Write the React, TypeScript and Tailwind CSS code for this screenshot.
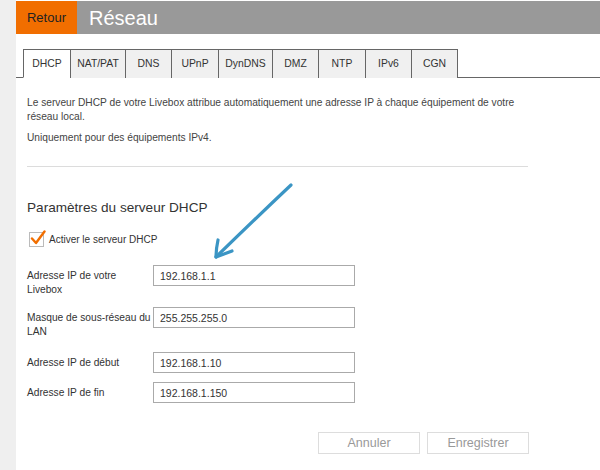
import { useState } from "react";

const tabs = [
	{ label: "DHCP", w: "w-[47px]" },
	{ label: "NAT/PAT", w: "w-[55px]" },
	{ label: "DNS", w: "w-[46px]" },
	{ label: "UPnP", w: "w-[47px]" },
	{ label: "DynDNS", w: "w-[54px]" },
	{ label: "DMZ", w: "w-[46px]" },
	{ label: "NTP", w: "w-[47px]" },
	{ label: "IPv6", w: "w-[46px]" },
	{ label: "CGN", w: "w-[47px]" },
];

const fields = [
	{ label: "Adresse IP de votre Livebox", value: "192.168.1.1", mb: "mb-[10px]" },
	{ label: "Masque de sous-réseau du LAN", value: "255.255.255.0", mb: "mb-[13px]" },
	{ label: "Adresse IP de début", value: "192.168.1.10", mb: "mb-[9px]" },
	{ label: "Adresse IP de fin", value: "192.168.1.150", mb: "" },
];

export default function App() {
	const [active, setActive] = useState("DHCP");
	const [enabled, setEnabled] = useState(true);

	return (
		<div className="relative flex h-[470px] w-[600px] overflow-hidden bg-white font-['Liberation_Sans',Arial,sans-serif] text-[#333]">
			<div className="w-[16px] shrink-0 bg-[#efefef]" />

			<div className="flex-1 pt-px">
				{/* Header */}
				<div className="flex h-[33px] bg-[#999999]">
					<button
						type="button"
						className="flex w-[61px] items-center justify-center bg-[#f16e00] text-[13px] text-[#222]"
					>
						Retour
					</button>
					<h1 className="flex items-center pl-[12px] text-[20px] text-white">Réseau</h1>
				</div>

				{/* Tabs */}
				<div className="mt-[15px] flex border-b border-[#666] pl-[7px]">
					{tabs.map((t, i) => {
						const isActive = t.label === active;
						return (
							<button
								key={t.label}
								type="button"
								onClick={() => setActive(t.label)}
								className={`-mb-px flex h-[29px] items-center justify-center border-t border-l border-[#666] text-[10.4px] text-[#333] ${t.w} ${
									i === tabs.length - 1 ? "border-r" : ""
								} ${isActive ? "border-b border-b-white bg-white" : "bg-[#f0f0f0]"}`}
							>
								{t.label}
							</button>
						);
					})}
				</div>

				{/* Content */}
				<div className="w-[514px] pl-[11px] text-[10.2px] leading-[14px] text-[#444]">
					<p className="mt-[18px] pr-[12px]">
						Le serveur DHCP de votre Livebox attribue automatiquement une adresse IP à chaque équipement de votre réseau local.
					</p>
					<p className="mt-[7px]">Uniquement pour des équipements IPv4.</p>

					<div className="mt-[21px] h-px w-[501px] bg-[#dcdcdc]" />

					<h2 className="mt-[32px] text-[13.6px] leading-[18px] text-[#333]">
						Paramètres du serveur DHCP
					</h2>

					<label className="mt-[15px] ml-[2px] flex items-center gap-[5px]">
						<span
							onClick={() => setEnabled(!enabled)}
							className="relative flex h-[15px] w-[15px] items-center justify-center border border-[#bbb] bg-white"
						>
							{enabled && (
								<svg viewBox="0 0 16 16" className="absolute -top-[3px] left-0 h-[16px] w-[16px]">
									<path d="M2 8.5 L6 13 L14.5 1.5" fill="none" stroke="#f16e00" strokeWidth="2.4" strokeLinecap="round" strokeLinejoin="round" />
								</svg>
							)}
						</span>
						<span className="text-[10px] text-[#333]">Activer le serveur DHCP</span>
					</label>

					<div className="mt-[18px]">
						{fields.map((f) => (
							<div key={f.label} className={`flex items-start ${f.mb}`}>
								<span className="w-[126px] pt-[4px] pr-[2px] text-[#333]">{f.label}</span>
								<input
									type="text"
									defaultValue={f.value}
									className="h-[21px] w-[202px] border border-[#aaa] bg-white px-[6px] text-[10.5px] text-[#333] outline-none"
								/>
							</div>
						))}
					</div>

					<div className="mt-[29px] flex justify-end gap-[7px] pr-px">
						<button type="button" className="h-[22px] w-[102px] border border-[#ddd] bg-white text-[12.5px] text-[#999]">
							Annuler
						</button>
						<button type="button" className="h-[22px] w-[102px] border border-[#ddd] bg-white text-[12.5px] text-[#999]">
							Enregistrer
						</button>
					</div>
				</div>
			</div>

			{/* Hand-drawn arrow */}
			<svg className="pointer-events-none absolute top-0 left-0" width="600" height="470">
				<g fill="none" stroke="#3b95c4" strokeWidth="3.2" strokeLinecap="round" strokeLinejoin="round">
					<path d="M291 185 Q256 218 216 257" />
					<path d="M218 240 Q216 249 216 257 L232 251" />
				</g>
			</svg>
		</div>
	);
}
